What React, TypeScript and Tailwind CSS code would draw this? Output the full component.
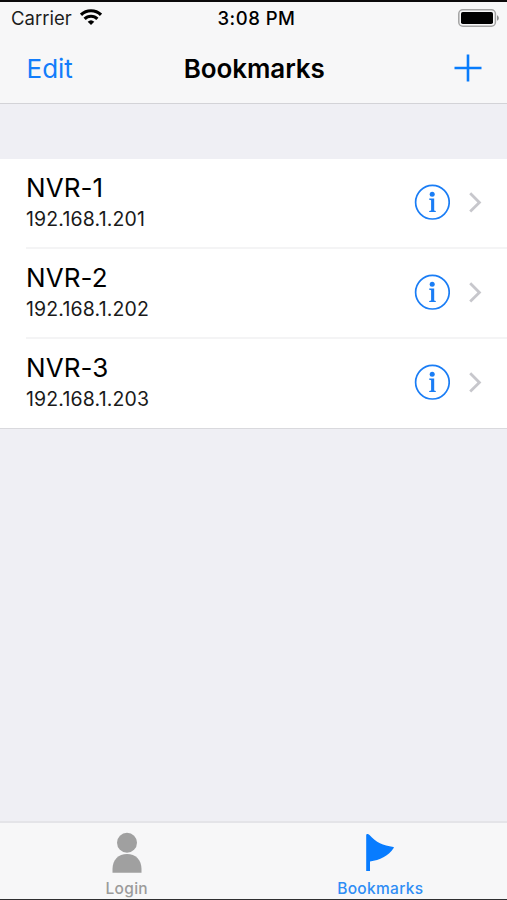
const bookmarks = [
  { name: "NVR-1", address: "192.168.1.201" },
  { name: "NVR-2", address: "192.168.1.202" },
  { name: "NVR-3", address: "192.168.1.203" },
];

function WifiIcon() {
  return (
    <svg className="-mt-0.5" width="22" height="16" viewBox="0 0 22 16" fill="none" stroke="#000" strokeWidth="3.1">
      <path d="M1 5.8a14.2 14.2 0 0 1 20 0" />
      <path d="M4.6 9.9a8.9 8.9 0 0 1 12.8 0" />
      <path d="M11 16 7.7 12.8a4.8 4.8 0 0 1 6.6 0Z" fill="#000" stroke="none" />
    </svg>
  );
}

function BatteryIcon() {
  return (
    <svg className="-mt-px" width="42" height="18" viewBox="0 0 42 18">
      <rect x="0.8" y="0.8" width="36.6" height="16.4" rx="4" fill="none" stroke="#a3a3a3" strokeWidth="1.5" />
      <rect x="3" y="3" width="32" height="12" rx="1.8" fill="#000" />
      <path d="M39 6.2c2.4 1 2.4 4.6 0 5.6Z" fill="#8e8e8e" />
    </svg>
  );
}

function InfoIcon() {
  return (
    <svg width="36" height="36" viewBox="0 0 36 36">
      <circle cx="18.4" cy="18.2" r="16.8" fill="none" stroke="#1a7df5" strokeWidth="1.7" />
      <circle cx="18.2" cy="10.2" r="2.5" fill="#1a7df5" />
      <path d="M15.2 14.6h5v12l1.6.4v1.1h-6.6V27l1.9-.4V16.2l-1.9-.4Z" fill="#1a7df5" />
    </svg>
  );
}

function ChevronIcon() {
  return (
    <svg width="14" height="22" viewBox="0 0 14 22" fill="none" stroke="#c7c7cc" strokeWidth="2.8">
      <path d="m2.2 2.3 9.2 9.1-9.2 9.1" />
    </svg>
  );
}

export default function App() {
  return (
    <div className="flex h-[900px] w-[507px] flex-col overflow-hidden border-t-2 border-b border-t-[#0c0a0b] border-b-[#2f2f31] bg-[#efeff4] font-['Inter',sans-serif] text-black">
      <header className="h-[102px] shrink-0 border-b border-[#d3d3d7] bg-[#f7f7f8]">
        <div className="grid h-8 grid-cols-3 items-center pr-[7px] pl-[11px]">
          <div className="flex items-center gap-2 text-[18.5px] text-[#1c1c1c]">
            <span className="pt-0.5">Carrier</span>
            <WifiIcon />
          </div>
          <span className="pt-0.5 pl-0.5 text-center text-[18.5px] font-medium tracking-[0.5px]">3:08 PM</span>
          <div className="flex justify-end">
            <BatteryIcon />
          </div>
        </div>
        <div className="grid h-[68px] grid-cols-3 items-center pr-[25px] pl-[26.5px]">
          <span className="text-[26px] text-[#127dfb]">Edit</span>
          <h1 className="text-center text-[26px] font-semibold tracking-[-0.1px]">Bookmarks</h1>
          <svg className="-mt-px justify-self-end" width="28" height="28" viewBox="0 0 28 28" stroke="#087cfc" strokeWidth="2.6">
            <path d="M14 .5v27M.5 14h27" />
          </svg>
        </div>
      </header>

      <main className="flex-1 pt-[55px]">
        <ul className="border-b border-[#d9d9dd] bg-white">
          {bookmarks.map((item) => (
            <li key={item.name} className="group flex h-[90px] pl-[26px] last:h-[89px]">
              <div className="flex flex-1 items-center border-b-2 border-[#f4f4f5] pr-[25px] group-last:border-b-0 group-last:pb-px">
                <div className="flex-1">
                  <div className="text-[26px] leading-8 tracking-[0.1px]">{item.name}</div>
                  <div className="pb-px text-[19.5px] leading-[30px] tracking-[0.15px] text-[#1a1a1a]">{item.address}</div>
                </div>
                <div className="-mt-0.5 flex items-center gap-[18px]">
                  <InfoIcon />
                  <ChevronIcon />
                </div>
              </div>
            </li>
          ))}
        </ul>
      </main>

      <nav className="grid h-[78px] shrink-0 grid-cols-2 border-t-2 border-[#e4e4e8] bg-[#f7f7f8] text-[15.5px] leading-5 font-medium tracking-[0.3px]">
        <div className="flex flex-col items-center pt-[9px] text-[#9b9b9b]">
          <svg width="30" height="41" viewBox="0 0 30 41" fill="#a0a0a0">
            <circle cx="15" cy="10.8" r="10" />
            <path d="M.5 40.8V36.8C.5 28 6.5 22 15 22S29.5 28 29.5 36.8V40.8Z" />
          </svg>
          <span className="mt-1.5">Login</span>
        </div>
        <div className="flex flex-col items-center pt-[9px] text-[#2e8df5]">
          <svg width="30" height="41" viewBox="0 0 30 41" fill="#087cff">
            <path d="M1.2 3.2C1.2 1.8 3.2 1.7 4.5 3C11 10.4 18 13.4 28.4 15C29 15.1 29 15.6 28.7 16.1C23 24.4 15 28 5 29.6V38.9H1.2Z" />
          </svg>
          <span className="mt-1.5">Bookmarks</span>
        </div>
      </nav>
    </div>
  );
}
